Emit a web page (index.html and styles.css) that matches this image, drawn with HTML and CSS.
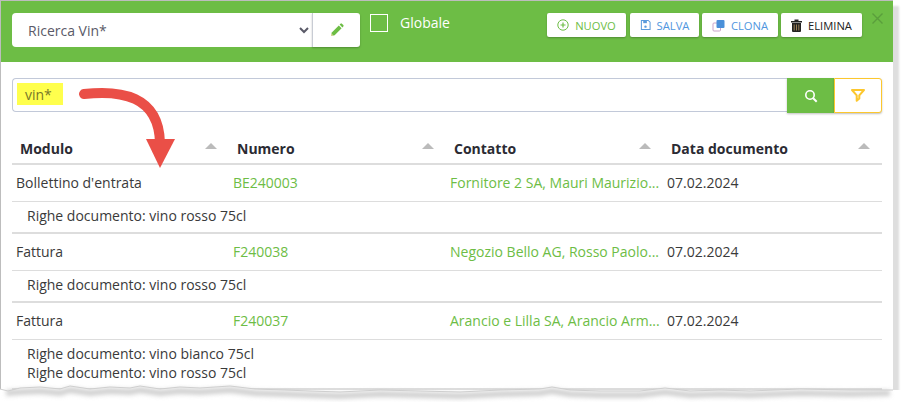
FILE: index.html
```html
<!DOCTYPE html>
<html lang="it">
<head>
  <meta charset="UTF-8">
  <title>Ricerca Vin*</title>
  <link rel="stylesheet" href="styles.css">
</head>
<body>

  <div class="window">
    <div class="topbar">
      <div class="preset">
        <select class="preset-select">
          <option>Ricerca Vin*</option>
        </select>
        <button class="preset-edit">
          <svg width="14" height="14" viewBox="0 0 14 14"><path d="M1 13l.8-3.6 7-7 2.8 2.8-7 7z" fill="#6dbd45"/><path d="M9.6 1.6l.9-.9a1 1 0 0 1 1.4 0l1.4 1.4a1 1 0 0 1 0 1.4l-.9.9z" fill="#6dbd45"/><path d="M1 13l.5-2.4 1.9 1.9z" fill="#e8d9a0"/></svg>
        </button>
      </div>
      <label class="global">
        <span class="global-box"></span>
        Globale
      </label>
      <div class="actions">
        <button class="action action-new">
          <svg width="12" height="12" viewBox="0 0 12 12"><circle cx="6" cy="6" r="5.2" fill="none" stroke="#6dbd45" stroke-width="1"/><path d="M6 3.5v5M3.5 6h5" stroke="#6dbd45" stroke-width="1.2"/></svg>
          NUOVO
        </button>
        <button class="action action-save">
          <svg width="11" height="12" viewBox="0 0 12 12"><path d="M1.5 1h7.500l2 2v8h-9.500z" fill="none" stroke="#5a9bdc" stroke-width="1.1"/><path d="M3.500 1.500h4v2.500h-4z" fill="#5a9bdc"/><circle cx="6" cy="7.800" r="1.300" fill="#5a9bdc"/></svg>
          SALVA
        </button>
        <button class="action action-clone">
          <svg width="13" height="13" viewBox="0 0 13 13"><rect x="1" y="4" width="7.500" height="8" rx="1" fill="#fff" stroke="#c9a3c9" stroke-width="1"/><rect x="4.500" y="1" width="8" height="8" rx="1" fill="#4a90d9"/></svg>
          CLONA
        </button>
        <button class="action action-delete">
          <svg width="11" height="13" viewBox="0 0 11 13"><path d="M0 2h11v1.500h-11zM3.500 .5h4v1.500h-4z" fill="#222"/><path d="M1 4h9v8a1 1 0 0 1-1 1h-7a1 1 0 0 1-1-1z" fill="#222"/><path d="M3.200 5.500v6M5.500 5.500v6M7.800 5.500v6" stroke="#a5885a" stroke-width=".9"/></svg>
          ELIMINA
        </button>
      </div>
      <svg class="close" width="11" height="11" viewBox="0 0 11 11"><path d="M.5.5l10 10M10.500.5l-10 10" stroke="#5a9e3c" stroke-width="1.400"/></svg>
    </div>

    <div class="content">
      <div class="search">
        <div class="search-input"><span class="search-term">vin*</span></div>
        <button class="search-btn">
          <svg width="14" height="14" viewBox="0 0 14 14"><circle cx="6" cy="6" r="4.200" fill="none" stroke="#fff" stroke-width="1.600"/><path d="M9.200 9.200l3.500 3.500" stroke="#fff" stroke-width="2"/></svg>
        </button>
        <button class="filter-btn">
          <svg width="14" height="13" viewBox="0 0 14 13"><path d="M1 1h12l-4.700 5.400v3.100l-2.600 2.300v-5.400z" fill="none" stroke="#fcc72e" stroke-width="2" stroke-linejoin="round"/></svg>
        </button>
      </div>

      <table class="results">
        <thead>
          <tr>
            <th><span>Modulo</span><i class="sort"></i></th>
            <th><span>Numero</span><i class="sort"></i></th>
            <th><span>Contatto</span><i class="sort"></i></th>
            <th><span>Data documento</span><i class="sort"></i></th>
          </tr>
        </thead>
        <tbody>
          <tr class="doc">
            <td>Bollettino d'entrata</td>
            <td><a>BE240003</a></td>
            <td><a>Fornitore 2 SA, Mauri Maurizio...</a></td>
            <td>07.02.2024</td>
          </tr>
          <tr class="hits"><td colspan="4">Righe documento: vino rosso 75cl</td></tr>
          <tr class="doc">
            <td>Fattura</td>
            <td><a>F240038</a></td>
            <td><a>Negozio Bello AG, Rosso Paolo...</a></td>
            <td>07.02.2024</td>
          </tr>
          <tr class="hits"><td colspan="4">Righe documento: vino rosso 75cl</td></tr>
          <tr class="doc">
            <td>Fattura</td>
            <td><a>F240037</a></td>
            <td><a>Arancio e Lilla SA, Arancio Arm...</a></td>
            <td>07.02.2024</td>
          </tr>
          <tr class="hits"><td colspan="4">Righe documento: vino bianco 75cl<br>Righe documento: vino rosso 75cl</td></tr>
        </tbody>
      </table>
    </div>
  </div>

  <!-- freccia rossa sopra la tabella -->
  <svg class="arrow" width="110" height="90" viewBox="0 0 110 90">
    <path d="M6 7C42 3 81 8 82 56" fill="none" stroke="#ea4f47" stroke-width="10" stroke-linecap="round"/>
    <path d="M68 52H97L82 81z" fill="#ea4f47"/>
  </svg>

  <!-- bordo strappato in fondo allo screenshot -->
  <svg class="torn" width="908" height="26" viewBox="0 0 908 26">
    <defs>
      <filter id="blur" x="-2%" y="-100%" width="104%" height="300%"><feGaussianBlur stdDeviation="2"/></filter>
    </defs>
    <path d="M0 5L8 7 20 4 40 3 60 5 70 2 90 5 110 3 130 4 140 2 160 5 180 3 200 4 230 2 255 5 285 6 310 7 340 8 380 6 420 7 460 8 500 6 540 5 552 3 570 6 600 7 640 7 665 4 690 7 720 6 750 7 800 5 850 6 893 6 908 6V26H0z" fill="#fff"/>
    <path d="M6 9L20 8 40 7 60 9 70 6 90 9 110 7 130 8 140 6 160 9 180 7 200 8 230 6 255 9 285 10 310 11 340 12 380 10 420 11 460 12 500 10 540 9 552 7 570 10 600 11 640 11 665 8 690 11 720 10 750 11 800 9 850 10 890 9" fill="none" stroke="#d0d0d0" stroke-width="6" filter="url(#blur)"/>
    <path d="M0 5L8 7 20 4 40 3 60 5 70 2 90 5 110 3 130 4 140 2 160 5 180 3 200 4 230 2 255 5 285 6 310 7 340 8 380 6 420 7 460 8 500 6 540 5 552 3 570 6 600 7 640 7 665 4 690 7 720 6 750 7 800 5 850 6 893 6" fill="none" stroke="#cfcfcf" stroke-width="1"/>
  </svg>

</body>
</html>
```

FILE: styles.css
```css
* {
  margin: 0;
  padding: 0;
  box-sizing: border-box;
}

body {
  background: #fff;
  height: 410px;
  overflow: hidden;
  position: relative;
  font-family: "Open Sans", "Liberation Sans", sans-serif;
  font-size: 14px;
  color: #3a3a3a;
}

button {
  font-family: inherit;
  border: none;
  background: #fff;
  cursor: pointer;
}

.window {
  width: 893px;
  height: 392px;
  border-top: 1px solid #bdbdbd;
  border-left: 1px solid #bdbdbd;
  box-shadow: 6px 6px 2px #dedede;
  overflow: hidden;
}

.topbar {
  height: 61px;
  background: #6dbd45;
  display: flex;
  align-items: flex-start;
  padding: 12px 0 0 11px;
  position: relative;
}

.preset {
  display: flex;
  width: 348px;
  height: 34px;
}

.preset-select {
  flex: 1;
  height: 34px;
  padding-left: 12px;
  border: none;
  border-radius: 4px 0 0 4px;
  background: #fff;
  font-family: inherit;
  font-size: 14px;
  color: #5a5a68;
}

.preset-edit {
  width: 48px;
  height: 34px;
  border-left: 1px solid #c8ccd4;
  border-radius: 0 3px 3px 0;
  box-shadow: 0 1px 2px rgba(0, 0, 0, 0.25);
  display: flex;
  align-items: center;
  justify-content: center;
}

.global {
  display: flex;
  align-items: center;
  gap: 12px;
  height: 18px;
  margin: 1px 0 0 10px;
  color: #fff;
  font-size: 14px;
  line-height: 16px;
}

.global-box {
  width: 18px;
  height: 18px;
  border: 1px solid #fff;
}

.actions {
  display: flex;
  gap: 3px;
  margin-left: auto;
  margin-right: 31px;
}

.action {
  height: 24px;
  display: flex;
  align-items: center;
  justify-content: center;
  gap: 6px;
  border-radius: 2px;
  font-size: 11.2px;
  font-weight: 500;
  box-shadow: 0 1px 2px rgba(0, 0, 0, 0.25);
}

.action-new { width: 79px; color: #6dbd45; }
.action-save { width: 69px; margin-left: 1px; color: #4f96de; }
.action-clone { width: 76px; color: #4f96de; }
.action-delete { width: 81px; color: #222; }

.close {
  position: absolute;
  top: 12px;
  right: 10px;
}

.content {
  padding: 16px 10px 0 11px;
}

.search {
  display: flex;
  width: 870px;
  height: 35px;
}

.search-input {
  flex: 1;
  height: 34px;
  padding: 4px;
  border: 1px solid #c2c9d9;
  border-right: none;
  border-radius: 4px 0 0 4px;
}

.search-term {
  display: block;
  width: 46px;
  height: 22px;
  padding-left: 8px;
  background: #ffff4d;
  color: #77772a;
  font-size: 14px;
  line-height: 24px;
}

.search-btn,
.filter-btn {
  display: flex;
  align-items: center;
  justify-content: center;
  box-shadow: 0 1px 2px rgba(0, 0, 0, 0.25);
}

.search-btn {
  width: 47px;
  background: #6dbd45;
  border-radius: 0;
}

.filter-btn {
  width: 48px;
  border: 1px solid #fcc72e;
  border-radius: 0 3px 3px 0;
}

.results {
  width: 870px;
  margin-top: 16px;
  border-collapse: collapse;
  table-layout: fixed;
}

.results th {
  width: 217px;
  height: 35px;
  padding: 3px 12px 0 8px;
  border-bottom: 2px solid #ddd;
  font-weight: 700;
  font-size: 14px;
  text-align: left;
  color: #2b2b33;
}

.results th:last-child {
  width: 219px;
}

.results th span {
  display: inline-block;
  vertical-align: middle;
}

.sort {
  float: right;
  margin-top: 6px;
  border-left: 6px solid transparent;
  border-right: 6px solid transparent;
  border-bottom: 6px solid #bbb;
}

.results td {
  padding: 0 4px;
  white-space: nowrap;
}

.doc td {
  height: 37px;
  border-bottom: 1px solid #ddd;
}

.hits td {
  height: 32px;
  padding-left: 15px;
  padding-bottom: 2px;
  border-bottom: 2px solid #ddd;
}

.hits:last-child td {
  height: 50px;
  padding-bottom: 1px;
  line-height: 19px;
}

.results a {
  color: #6dbd45;
}

.arrow {
  position: absolute;
  left: 78px;
  top: 87px;
}

.torn {
  position: absolute;
  left: 0;
  top: 384px;
}
```
